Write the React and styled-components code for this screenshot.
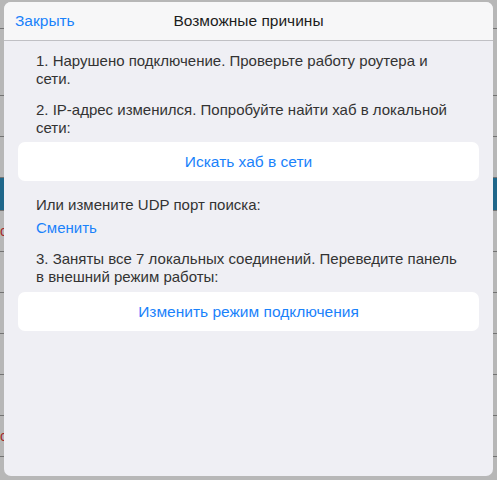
import React from 'react';
import styled, { createGlobalStyle } from 'styled-components';

const GlobalStyle = createGlobalStyle`
  html, body {
    margin: 0;
    padding: 0;
    width: 497px;
    height: 480px;
    overflow: hidden;
    font-family: "Liberation Sans", Arial, sans-serif;
  }
`;

const Screen = styled.div`
  position: relative;
  width: 497px;
  height: 480px;
  background: #f4f4f4;
  overflow: hidden;
`;

// the page behind the popover, only its edges show
const BackList = styled.div`
  display: flex;
  flex-direction: column;
`;

const BackRow = styled.div`
  height: ${p => p.h}px;
  border-bottom: 1px solid #9a9a9a;
  background: ${p => p.bg || 'transparent'};
  display: flex;
  justify-content: space-between;
  align-items: center;
  font-size: 14px;
  color: ${p => p.color || '#222'};
`;

const Dim = styled.div`
  position: absolute;
  inset: 0;
  background: rgba(0, 0, 0, 0.25);
`;

const Popover = styled.div`
  position: absolute;
  left: 4px;
  top: 2px;
  width: 489px;
  height: 474px;
  border-radius: 7px;
  background: #efeff4;
  overflow: hidden;
  display: flex;
  flex-direction: column;
`;

const Header = styled.div`
  height: 38px;
  flex-shrink: 0;
  background: #f7f7f8;
  border-bottom: 1px solid #c0c0c4;
  display: grid;
  grid-template-columns: 1fr auto 1fr;
  align-items: center;
  padding: 0 11px;
`;

const Close = styled.span`
  color: #1a82fb;
  font-size: 15.5px;
`;

const Title = styled.span`
  color: #1d1d1d;
  font-size: 15.5px;
`;

const Body = styled.div`
  padding: 11px 14px 0 14px;
  display: flex;
  flex-direction: column;
`;

const Para = styled.p`
  margin: 0 0 ${p => p.mb || 0}px 0;
  padding: 0 0 0 18px;
  font-size: 15px;
  line-height: 18px;
  color: #333;
  white-space: nowrap;
`;

const Link = styled.span`
  display: block;
  padding: 0 18px;
  font-size: 15px;
  line-height: 18px;
  color: #1a82fb;
  margin-bottom: ${p => p.mb || 0}px;
`;

const Action = styled.div`
  height: 39px;
  background: #fff;
  border-radius: 7px;
  display: flex;
  align-items: center;
  justify-content: center;
  color: #1a82fb;
  font-size: 15.5px;
  margin-bottom: ${p => p.mb || 0}px;
`;

export default function App() {
  return (
    <>
      <GlobalStyle />
      <Screen>
        <BackList>
          <BackRow h={28} />
          <BackRow h={66} />
          <BackRow h={40} />
          <BackRow h={40} />
          <BackRow h={32} bg="#2a8ab8" />
          <BackRow h={40} color="#d33">c</BackRow>
          <BackRow h={40} />
          <BackRow h={40} />
          <BackRow h={40} />
          <BackRow h={40} />
          <BackRow h={40} color="#d33">c</BackRow>
          <BackRow h={40} />
        </BackList>
        <Dim />
        <Popover>
          <Header>
            <Close>Закрыть</Close>
            <Title>Возможные причины</Title>
            <span />
          </Header>
          <Body>
            <Para mb={13}>
              1. Нарушено подключение. Проверьте работу роутера и<br />сети.
            </Para>
            <Para mb={5}>
              2. IP-адрес изменился. Попробуйте найти хаб в локальной<br />сети:
            </Para>
            <Action mb={15}>Искать хаб в сети</Action>
            <Para mb={5}>Или измените UDP порт поиска:</Para>
            <Link mb={13}>Сменить</Link>
            <Para mb={6}>
              3. Заняты все 7 локальных соединений. Переведите панель<br />в внешний режим работы:
            </Para>
            <Action>Изменить режим подключения</Action>
          </Body>
        </Popover>
      </Screen>
    </>
  );
}
